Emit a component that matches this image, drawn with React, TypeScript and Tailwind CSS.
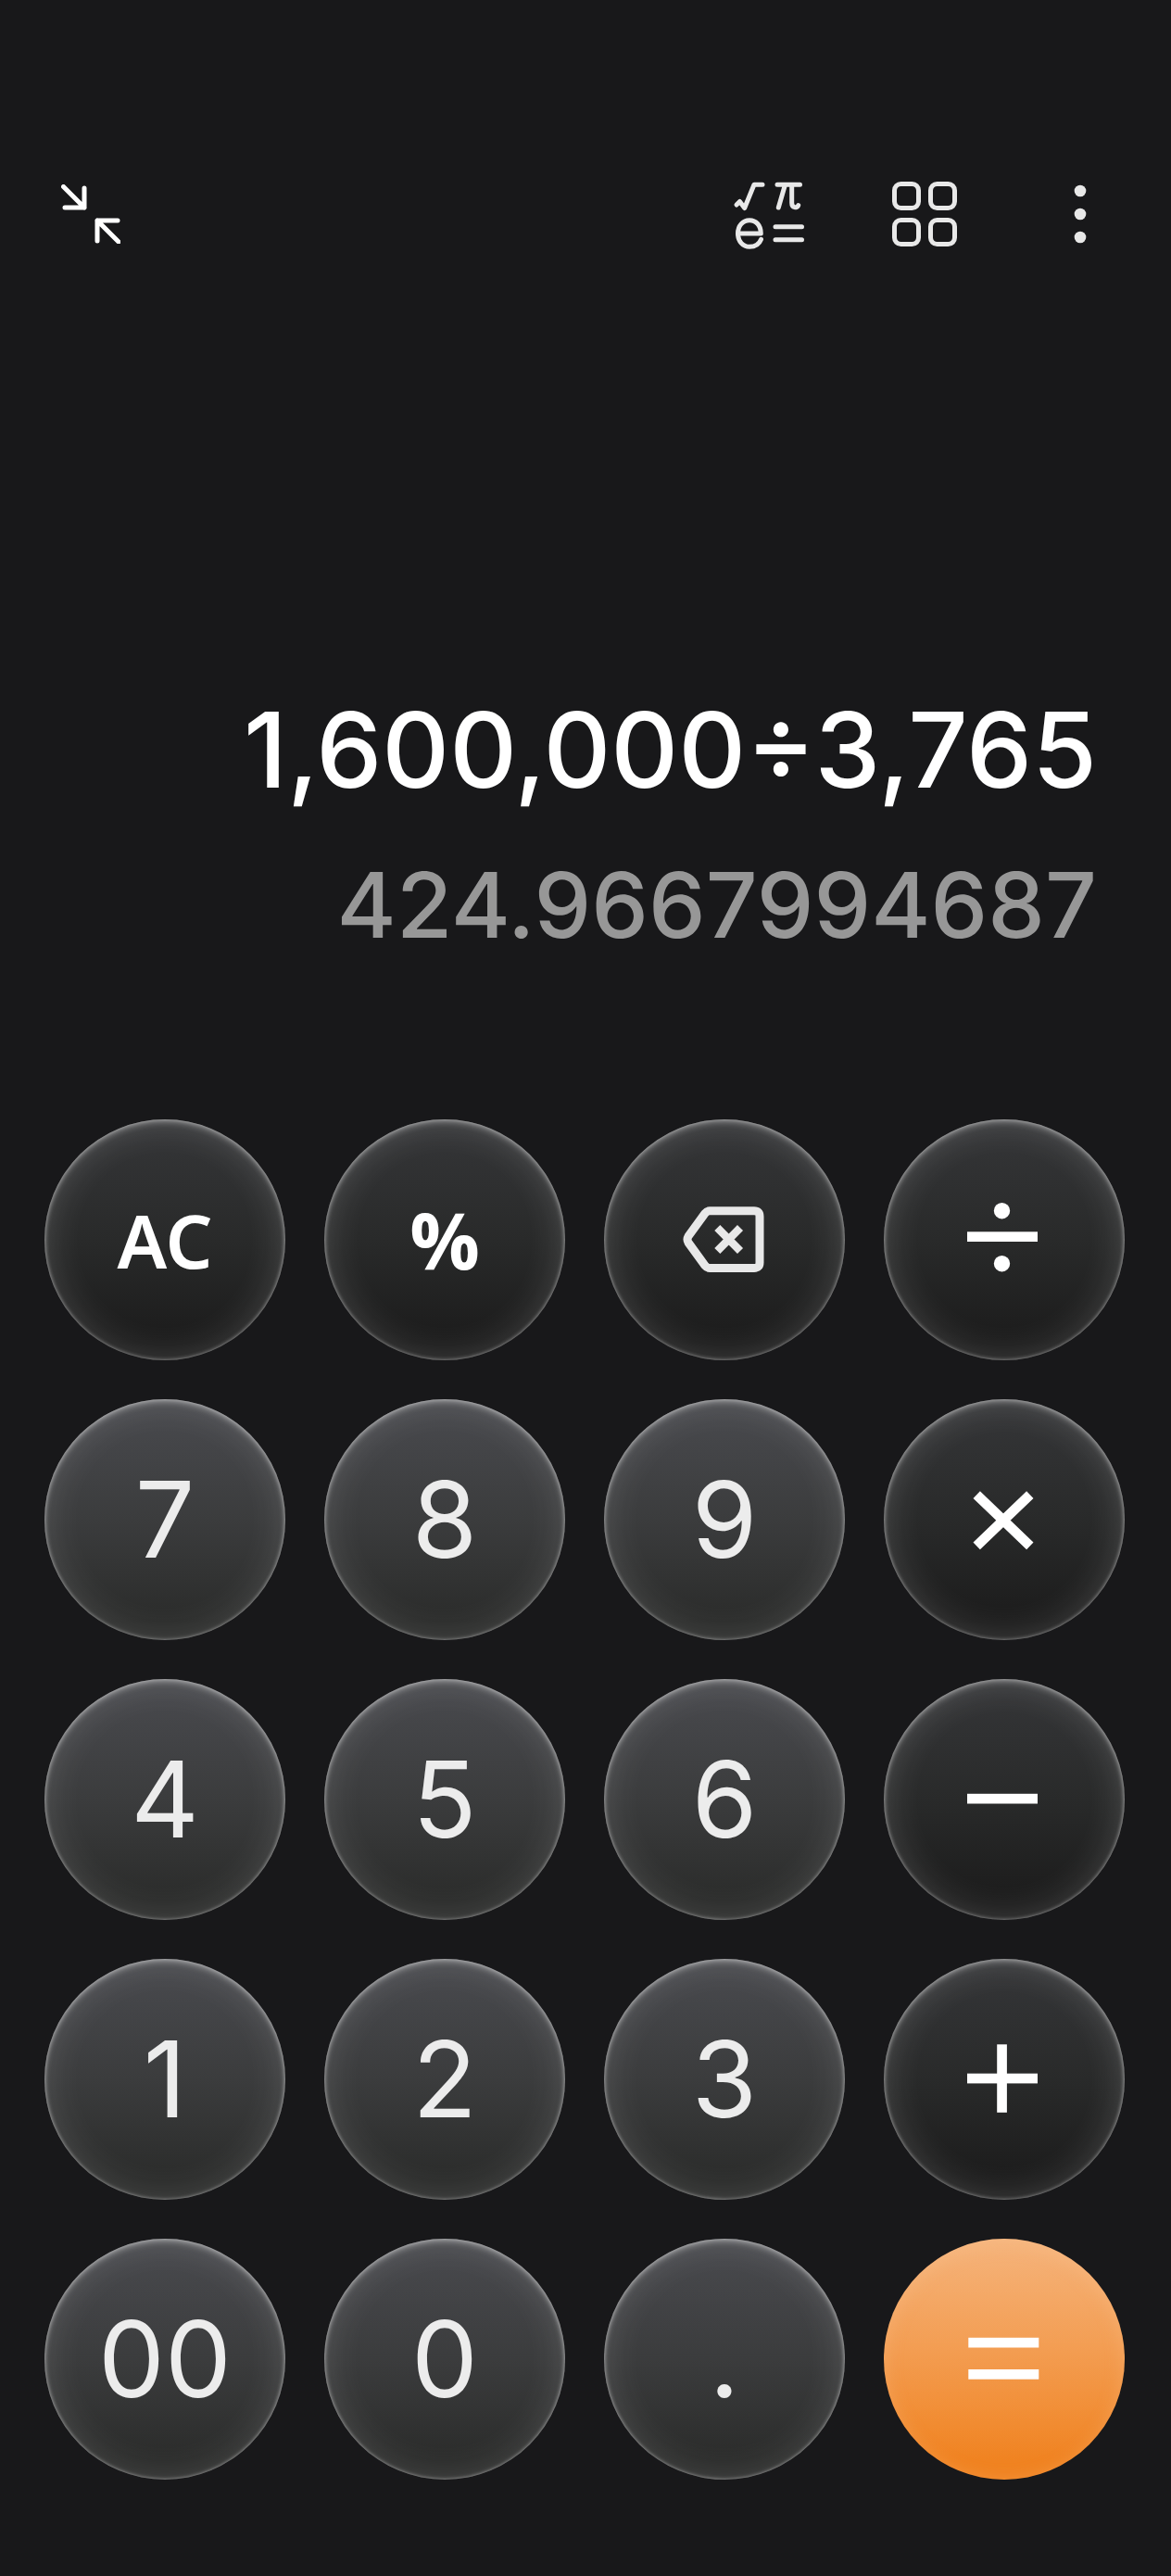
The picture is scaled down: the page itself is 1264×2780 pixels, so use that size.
import type { ReactNode } from "react";
import clsx from "clsx";

type KeyKind = "digit" | "action" | "equals";

interface CalcKey {
    id: string;
    kind: KeyKind;
    content: ReactNode;
    textClass?: string;
}

function CollapseIcon() {
    return (
        <svg
            viewBox="0 0 64 64"
            className="w-16 h-16"
            fill="none"
            stroke="#ffffff"
            strokeWidth="5"
            strokeLinecap="round"
            strokeLinejoin="round"
        >
            <path d="M2.5 2.5 25 25M25 4V25H4" />
            <path d="M62 62 39 39M61 39H39V61" />
        </svg>
    );
}

function ScientificIcon() {
    return (
        <svg
            viewBox="0 0 80 80"
            className="w-20 h-20"
            fill="none"
            stroke="#e8e8e8"
            strokeWidth="5"
            strokeLinecap="round"
            strokeLinejoin="round"
        >
            {/* root */}
            <path d="M5 30 8.5 26.5 13.7 33.5 24 8.3H33" />
            {/* pi */}
            <path d="M49 8.3H73.5M57.5 8.3 50.3 33M64.7 8.3V28C64.7 33.5 70.5 34 71.7 30.7" />
            {/* e */}
            <path d="M6.5 61H31.3C31.3 52 26 46.7 19 46.7S6.5 52.5 6.5 61 12 75.3 19 75.3C25 75.3 29.5 72.5 31.5 67.3" />
            {/* equals */}
            <path d="M47 53.7H75.5M47 67.8H75.5" />
        </svg>
    );
}

function GridIcon() {
    return (
        <svg viewBox="0 0 70 70" className="w-[70px] h-[70px]" fill="none" stroke="#e8e8e8" strokeWidth="5">
            <rect x="2.5" y="2.5" width="26" height="26" rx="7" />
            <rect x="41.5" y="2.5" width="26" height="26" rx="7" />
            <rect x="2.5" y="41.5" width="26" height="26" rx="7" />
            <rect x="41.5" y="41.5" width="26" height="26" rx="7" />
        </svg>
    );
}

function MoreIcon() {
    return (
        <svg viewBox="0 0 16 64" className="w-4 h-16" fill="#e8e8e8">
            <circle cx="8" cy="7" r="6.3" />
            <circle cx="8" cy="32" r="6.3" />
            <circle cx="8" cy="57" r="6.3" />
        </svg>
    );
}

function BackspaceIcon() {
    return (
        <svg viewBox="0 0 90 72" className="w-[90px] h-[72px]" fill="none" stroke="#e8e8e8">
            <path
                d="M29 4.8H77Q83 4.8 83 10.8V60.4Q83 66.4 77 66.4H29Q26 66.4 24 63.8L6 39Q4 35.6 6 32.2L24 7.4Q26 4.8 29 4.8Z"
                strokeWidth="9"
                strokeLinejoin="round"
            />
            <path d="M37.3 23 62 48M62 23 37.3 48" strokeWidth="8.5" />
        </svg>
    );
}

function OperatorIcon({ children }: { children: ReactNode }) {
    return (
        <svg viewBox="0 0 80 80" className="w-20 h-20" fill="#ffffff">
            {children}
        </svg>
    );
}

const digit = (value: string): CalcKey => ({ id: value, kind: "digit", content: value });

const keys: CalcKey[] = [
    { id: "All clear", kind: "action", content: "AC", textClass: "font-['Noto_Sans',sans-serif] font-semibold text-[80px]" },
    { id: "Percent", kind: "action", content: "%", textClass: "font-['Open_Sans',sans-serif] font-bold text-[84px]" },
    { id: "Backspace", kind: "action", content: <BackspaceIcon /> },
    {
        id: "Divide",
        kind: "action",
        content: (
            <OperatorIcon>
                <circle cx="37.5" cy="8.7" r="8.7" />
                <rect x="0" y="31.3" width="76" height="10.7" />
                <circle cx="37.5" cy="65.7" r="8.7" />
            </OperatorIcon>
        ),
    },
    digit("7"),
    digit("8"),
    digit("9"),
    {
        id: "Multiply",
        kind: "action",
        content: (
            <OperatorIcon>
                <path d="M10.2 13.2 67.8 68.4M67.8 13.2 10.2 68.4" stroke="#ffffff" strokeWidth="10.7" />
            </OperatorIcon>
        ),
    },
    digit("4"),
    digit("5"),
    digit("6"),
    {
        id: "Subtract",
        kind: "action",
        content: (
            <OperatorIcon>
                <rect x="0" y="33.8" width="76" height="10.7" />
            </OperatorIcon>
        ),
    },
    digit("1"),
    digit("2"),
    digit("3"),
    {
        id: "Add",
        kind: "action",
        content: (
            <OperatorIcon>
                <rect x="0" y="33.7" width="76" height="10.7" />
                <rect x="32.2" y="2.3" width="10.7" height="73.5" />
            </OperatorIcon>
        ),
    },
    digit("00"),
    digit("0"),
    digit("."),
    {
        id: "Equals",
        kind: "equals",
        content: (
            <OperatorIcon>
                <rect x="1.3" y="16.8" width="76" height="10.7" />
                <rect x="1.3" y="51" width="76" height="10.7" />
            </OperatorIcon>
        ),
    },
];

const kindClasses: Record<KeyKind, string> = {
    digit: "bg-[linear-gradient(180deg,#48494d_5%,#3b3c3d_50%,#2b2c2b_92%)] shadow-[inset_0_0_40px_rgba(255,255,255,0.15),inset_0_0_4px_rgba(255,255,255,0.5),inset_0_4px_6px_rgba(255,255,255,0.28)] text-[#ececec]",
    action: "bg-[linear-gradient(180deg,#343537_5%,#292a2a_50%,#1c1c1c_92%)] shadow-[inset_0_0_40px_rgba(255,255,255,0.18),inset_0_0_4px_rgba(255,255,255,0.5),inset_0_4px_6px_rgba(255,255,255,0.25)] text-white",
    equals: "bg-[linear-gradient(180deg,#f5b47c_0%,#f39c50_48%,#f08321_92%)] shadow-[inset_0_4px_20px_rgba(255,200,150,0.3)] text-white",
};

function KeyButton({ item }: { item: CalcKey }) {
    return (
        <button
            type="button"
            aria-label={item.id}
            className={clsx(
                "flex items-center justify-center aspect-square rounded-full leading-none",
                kindClasses[item.kind],
                item.textClass ?? "text-[114px]"
            )}
        >
            {item.content}
        </button>
    );
}

export default function App() {
    return (
        <div className="flex flex-col min-h-screen bg-[#18181a] font-['Inter',sans-serif]">
            {/* Toolbar */}
            <header className="flex items-center justify-between pt-[191px] pl-[66px] pr-[58px]">
                <button type="button" aria-label="Minimize">
                    <CollapseIcon />
                </button>
                <div className="flex items-center gap-[88px]">
                    <button type="button" aria-label="Scientific" className="flex w-20 h-20 items-center justify-center">
                        <ScientificIcon />
                    </button>
                    <button type="button" aria-label="Tools" className="flex w-20 h-20 items-center justify-center">
                        <GridIcon />
                    </button>
                    <button type="button" aria-label="More" className="flex w-20 h-20 items-center justify-center">
                        <MoreIcon />
                    </button>
                </div>
            </header>

            {/* Display */}
            <main className="flex flex-1 flex-col justify-end gap-10 px-20 pb-[171px] text-right font-medium">
                <p className="text-[113px] leading-[136px] text-white">1,600,000÷3,765</p>
                <output className="block text-[98px] leading-[120px] text-[#979797]">424.9667994687</output>
            </main>

            {/* Keypad */}
            <div className="grid grid-cols-4 gap-[42px] pl-12 pr-[50px] pb-[104px]">
                {keys.map((item) => (
                    <KeyButton key={item.id} item={item} />
                ))}
            </div>
        </div>
    );
}
